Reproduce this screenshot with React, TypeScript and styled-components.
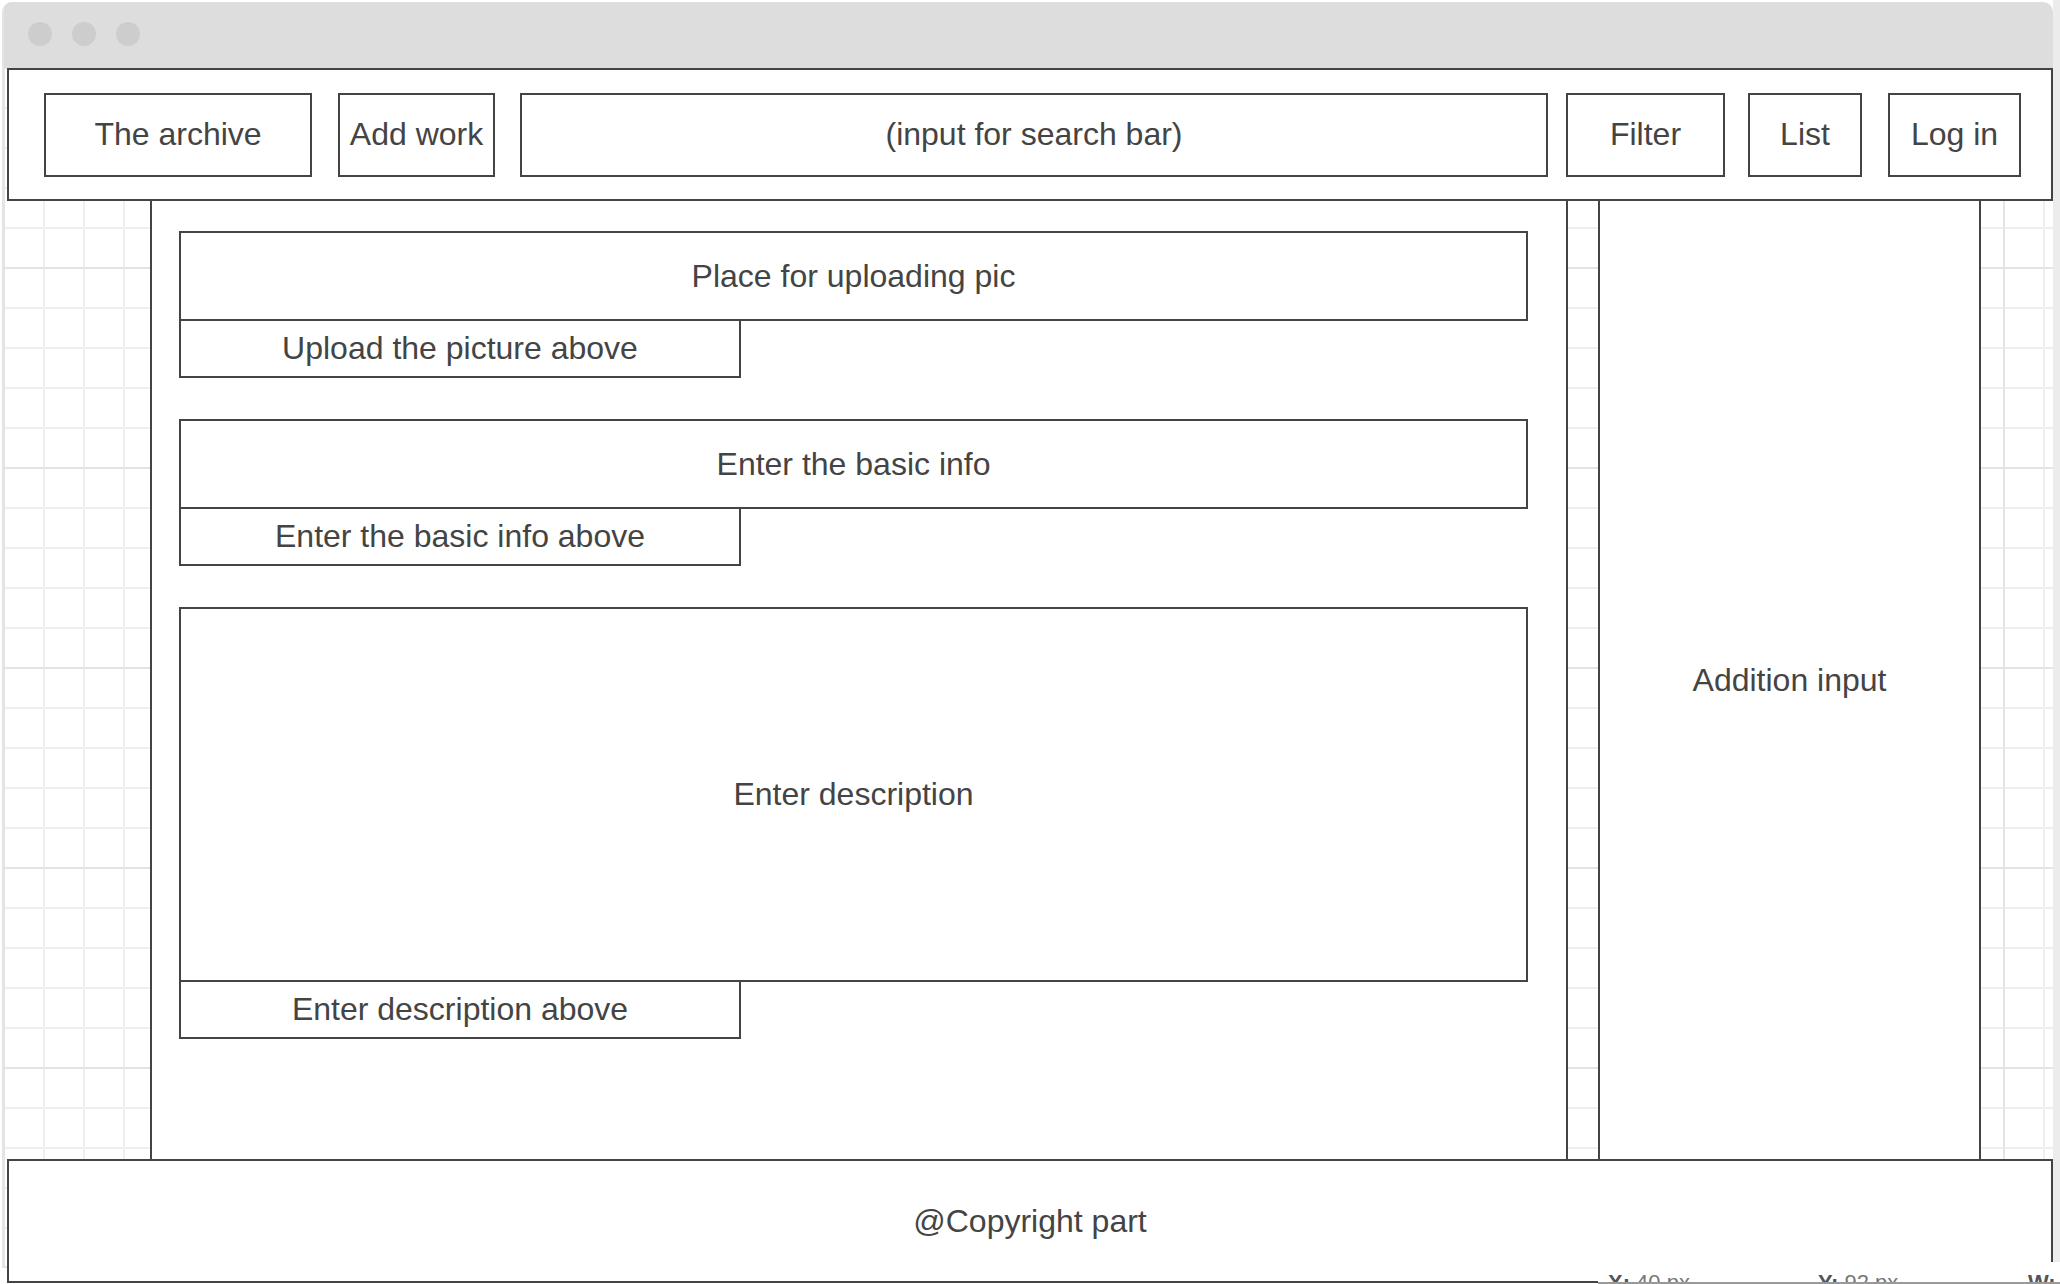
import styled, { createGlobalStyle } from "styled-components";

const GlobalStyle = createGlobalStyle`
  html, body {
    margin: 0;
    padding: 0;
    background: #ffffff;
  }
  * {
    box-sizing: border-box;
  }
`;

const Page = styled.div`
  position: relative;
  display: flex;
  height: 1284px;
  overflow: hidden;
  font-family: "Liberation Sans", Arial, Helvetica, sans-serif;
  color: #444444;
`;

const Window = styled.div`
  width: 2051px;
  height: 1266px;
  margin: 2px 0 0 2px;
  display: flex;
  flex-direction: column;
  border-left: 2px solid #e4e4e4;
  border-bottom: 2px solid #e4e4e4;
  border-radius: 10px 10px 0 0;
  flex-shrink: 0;
`;

const Gutter = styled.div`
  flex: 1;
  background: #ececec;
`;

const TitleBar = styled.div`
  height: 66px;
  flex-shrink: 0;
  display: flex;
  align-items: center;
  gap: 20px;
  padding: 0 0 2px 24px;
  background: #dddddd;
  border-radius: 8px 10px 0 0;
`;

const Dot = styled.span`
  width: 24px;
  height: 24px;
  border-radius: 50%;
  background: #cdcdcd;
`;

const Canvas = styled.div`
  flex: 1;
  min-height: 0;
  display: flex;
  flex-direction: column;
  background-color: #ffffff;
  background-image: linear-gradient(#e4e4e4 2px, transparent 2px),
    linear-gradient(90deg, #e4e4e4 2px, transparent 2px),
    linear-gradient(#efefef 2px, transparent 2px),
    linear-gradient(90deg, #efefef 2px, transparent 2px);
  background-size: 200px 200px, 200px 200px, 40px 40px, 40px 40px;
  background-position: -1px -1px;
`;

const Header = styled.div`
  flex-shrink: 0;
  height: 133px;
  margin-left: 3px;
  padding-left: 35px;
  display: flex;
  align-items: center;
  background: #ffffff;
  border: 2px solid #444444;
`;

const NavBox = styled.div<{ $w: number; $ml?: number }>`
  width: ${(p) => p.$w}px;
  height: 84px;
  margin-left: ${(p) => p.$ml ?? 0}px;
  flex-shrink: 0;
  display: flex;
  align-items: center;
  justify-content: center;
  border: 2px solid #444444;
  font-size: 32px;
  white-space: nowrap;
`;

const Middle = styled.div`
  flex-shrink: 0;
  height: 958px;
  display: flex;
  padding-left: 146px;
`;

const MainPanel = styled.div`
  width: 1418px;
  padding: 30px 38px 0 27px;
  display: flex;
  flex-direction: column;
  gap: 41px;
  background: #ffffff;
  border-left: 2px solid #444444;
  border-right: 2px solid #444444;
`;

const FieldGroup = styled.div`
  display: flex;
  flex-direction: column;
`;

const Field = styled.div<{ $h: number }>`
  height: ${(p) => p.$h}px;
  display: flex;
  align-items: center;
  justify-content: center;
  border: 2px solid #444444;
  font-size: 32px;
`;

const Caption = styled.div`
  width: 562px;
  height: 57px;
  display: flex;
  align-items: center;
  justify-content: center;
  border: 2px solid #444444;
  border-top: none;
  font-size: 32px;
`;

const SidePanel = styled.div`
  width: 383px;
  margin-left: 30px;
  display: flex;
  align-items: center;
  justify-content: center;
  background: #ffffff;
  border-left: 2px solid #444444;
  border-right: 2px solid #444444;
  font-size: 32px;
`;

const Footer = styled.div`
  flex-shrink: 0;
  height: 124px;
  margin-left: 3px;
  display: flex;
  align-items: center;
  justify-content: center;
  background: #ffffff;
  border: 2px solid #444444;
  font-size: 32px;
`;

// floating coordinates readout, clipped by the bottom edge of the page
const CoordBar = styled.div`
  position: absolute;
  left: 1598px;
  top: 1262px;
  width: 462px;
  height: 22px;
  overflow: hidden;
  display: flex;
  padding: 10px 0 0 10px;
  background: #ffffff;
  border-bottom: 2px solid #999999;
  font-size: 22px;
  line-height: 22px;
  color: #777777;
`;

const CoordItem = styled.div`
  width: 210px;
  flex-shrink: 0;
  white-space: nowrap;

  b {
    color: #555555;
  }
`;

const nav = [
  { label: "The archive", w: 268, ml: 0 },
  { label: "Add work", w: 157, ml: 26 },
  { label: "(input for search bar)", w: 1028, ml: 25 },
  { label: "Filter", w: 159, ml: 18 },
  { label: "List", w: 114, ml: 23 },
  { label: "Log in", w: 133, ml: 26 },
];

const fields = [
  { label: "Place for uploading pic", caption: "Upload the picture above", h: 90 },
  { label: "Enter the basic info", caption: "Enter the basic info above", h: 90 },
  { label: "Enter description", caption: "Enter description above", h: 375 },
];

export default function App() {
  return (
    <Page>
      <GlobalStyle />
      <Window>
        <TitleBar>
          <Dot />
          <Dot />
          <Dot />
        </TitleBar>
        <Canvas>
          <Header>
            {nav.map((n) => (
              <NavBox key={n.label} $w={n.w} $ml={n.ml}>
                {n.label}
              </NavBox>
            ))}
          </Header>
          <Middle>
            <MainPanel>
              {fields.map((f) => (
                <FieldGroup key={f.label}>
                  <Field $h={f.h}>{f.label}</Field>
                  <Caption>{f.caption}</Caption>
                </FieldGroup>
              ))}
            </MainPanel>
            <SidePanel>Addition input</SidePanel>
          </Middle>
          <Footer>@Copyright part</Footer>
        </Canvas>
      </Window>
      <Gutter />
      <CoordBar>
        <CoordItem>
          <b>X:</b> 40 px
        </CoordItem>
        <CoordItem>
          <b>Y:</b> 92 px
        </CoordItem>
        <CoordItem>
          <b>W:</b> 268 px
        </CoordItem>
      </CoordBar>
    </Page>
  );
}
